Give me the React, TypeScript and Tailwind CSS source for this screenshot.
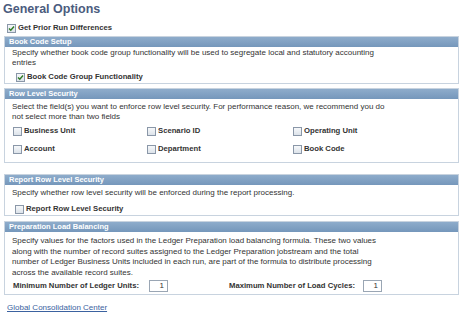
import React from 'react';

const font = { fontFamily: '"Liberation Sans", Arial, sans-serif' };

function Box({ checked = false }: { checked?: boolean }) {
  return (
    <span className="inline-flex w-[9px] h-[9px] shrink-0 items-center justify-center border border-[#8a97a8] bg-gradient-to-b from-[#f6f8fa] to-[#dde3ea]">
      {checked && (
        <svg width="7" height="7" viewBox="0 0 7 7">
          <path d="M1 3.5 L2.8 5.3 L6 1.5" fill="none" stroke="#2d7a24" strokeWidth="1.4" />
        </svg>
      )}
    </span>
  );
}

function Check({ label, checked }: { label: string; checked?: boolean }) {
  return (
    <label className="flex h-[10px] items-center gap-[2px] whitespace-nowrap text-[7.7px] font-bold leading-none text-[#333]">
      <Box checked={checked} />
      <span>{label}</span>
    </label>
  );
}

function Panel({ title, children, className = '' }: { title: string; children: React.ReactNode; className?: string }) {
  return (
    <div className={`ml-[4px] w-[455px] border border-[#c8d3df] ${className}`}>
      <div className="h-[10px] bg-gradient-to-b from-[#8eaccb] to-[#7597bb] px-[4px] text-[7.5px] font-bold leading-[10px] text-white">
        {title}
      </div>
      <div className="pl-[7px]">{children}</div>
    </div>
  );
}

export default function App() {
  return (
    <div className="h-[317px] w-[474px] bg-white text-[#333]" style={font}>
      <div className="h-[17px] pl-[3px] pt-[1px] text-[12.5px] font-bold leading-[16px] text-[#4b5c7e]">General Options</div>
      <div className="h-[19px] pl-[7px] pt-[6px]">
        <Check label="Get Prior Run Differences" checked />
      </div>

      <Panel title="Book Code Setup">
        <p className="whitespace-nowrap pt-[1px] text-[8px] leading-[10px]">
          Specify whether book code group functionality will be used to segregate local and statutory accounting
          <br />
          entries
        </p>
        <div className="pl-[4px] pt-[4px] pb-[1px]">
          <Check label="Book Code Group Functionality" checked />
        </div>
      </Panel>

      <Panel title="Row Level Security" className="mt-[4px]">
        <p className="whitespace-nowrap pt-[3px] text-[8px] leading-[10px]">
          Select the field(s) you want to enforce row level security. For performance reason, we recommend you do
          <br />
          not select more than two fields
        </p>
        <div className="grid grid-cols-[134px_146px_1fr] gap-y-[8px] pl-[1px] pt-[4px] pb-[8px]">
          <Check label="Business Unit" />
          <Check label="Scenario ID" />
          <Check label="Operating Unit" />
          <Check label="Account" />
          <Check label="Department" />
          <Check label="Book Code" />
        </div>
      </Panel>

      <Panel title="Report Row Level Security" className="mt-[11px]">
        <p className="pt-[3px] text-[8px] leading-[10px]">
          Specify whether row level security will be enforced during the report processing.
        </p>
        <div className="pl-[3px] pt-[6px] pb-[1px]">
          <Check label="Report Row Level Security" />
        </div>
      </Panel>

      <Panel title="Preparation Load Balancing" className="mt-[5px]">
        <p className="whitespace-nowrap pt-[4px] text-[8px] leading-[10.5px]">
          Specify values for the factors used in the Ledger Preparation load balancing formula. These two values
          <br />
          along with the number of record suites assigned to the Ledger Preparation jobstream and the total
          <br />
          number of Ledger Business Units included in each run, are part of the formula to distribute processing
          <br />
          across the available record suites.
        </p>
        <div className="flex items-center whitespace-nowrap pl-[1px] pt-[2px] pb-[2px] text-[7.7px] font-bold">
          <span className="w-[136px]">Minimum Number of Ledger Units:</span>
          <span className="flex h-[12px] w-[19px] items-center justify-end border border-[#9aa6b4] pr-[3px] text-[8px] font-normal">1</span>
          <span className="ml-[61px] w-[134px]">Maximum Number of Load Cycles:</span>
          <span className="flex h-[12px] w-[19px] items-center justify-end border border-[#9aa6b4] pr-[3px] text-[8px] font-normal">1</span>
        </div>
      </Panel>

      <a className="ml-[7px] mt-[7px] block text-[8px] text-[#3b62a0] underline">Global Consolidation Center</a>
    </div>
  );
}
